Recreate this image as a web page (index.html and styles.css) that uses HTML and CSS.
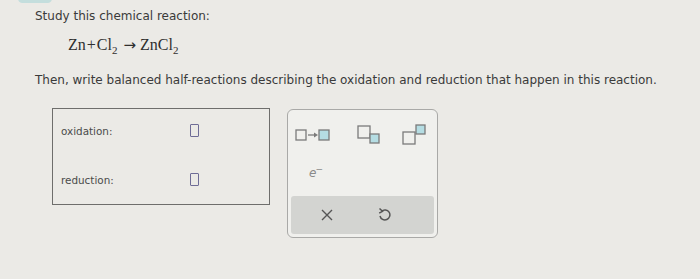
FILE: index.html
```html
<!DOCTYPE html>
<html lang="en">
<head>
    <meta charset="UTF-8">
    <meta name="viewport" content="width=device-width, initial-scale=1.0">
    <title>Half-Reactions</title>
    <link rel="stylesheet" href="styles.css">
</head>
<body>
    <!-- Tab edge peeking in at the top -->
    <div class="tab"></div>

    <div class="page">
        <p class="prompt">Study this chemical reaction:</p>

        <!-- The reaction itself, set in a serif face -->
        <p class="equation">Zn<span class="op">+</span>Cl<sub>2</sub><span class="arrow">&#8594;</span>ZnCl<sub>2</sub></p>

        <p class="prompt instruction">Then, write balanced half-reactions describing the oxidation and reduction that happen in this reaction.</p>

        <div class="workarea">
            <!-- Answer fields -->
            <div class="answer-box">
                <div class="answer-row">
                    <span class="answer-label">oxidation:</span>
                    <span class="slot"></span>
                </div>
                <div class="answer-row">
                    <span class="answer-label">reduction:</span>
                    <span class="slot"></span>
                </div>
            </div>

            <!-- Palette of templates -->
            <div class="palette">
                <div class="palette-row">
                    <button class="tool" type="button" title="Arrow">
                        <svg width="36" height="14" viewBox="0 0 36 14">
                            <rect x="1" y="2" width="10" height="10" fill="none" stroke="#7a7a7a" stroke-width="1.3"/>
                            <line x1="13" y1="7" x2="20" y2="7" stroke="#7a7a7a" stroke-width="1.3"/>
                            <path d="M19 4.5 L23 7 L19 9.5 Z" fill="#7a7a7a"/>
                            <rect x="24" y="2" width="10" height="10" fill="#b5dde3" stroke="#7a7a7a" stroke-width="1.3"/>
                        </svg>
                    </button>
                    <button class="tool" type="button" title="Subscript">
                        <svg width="24" height="20" viewBox="0 0 24 20">
                            <rect x="1" y="1" width="12" height="12" fill="none" stroke="#7a7a7a" stroke-width="1.3"/>
                            <rect x="13" y="9" width="9" height="9" fill="#b5dde3" stroke="#7a7a7a" stroke-width="1.3"/>
                        </svg>
                    </button>
                    <button class="tool" type="button" title="Superscript">
                        <svg width="26" height="22" viewBox="0 0 26 22">
                            <rect x="1" y="8" width="12" height="12" fill="none" stroke="#7a7a7a" stroke-width="1.3"/>
                            <rect x="14" y="1" width="9" height="9" fill="#b5dde3" stroke="#7a7a7a" stroke-width="1.3"/>
                        </svg>
                    </button>
                </div>

                <div class="electron">e<sup>&minus;</sup></div>

                <div class="action-bar">
                    <button class="action clear" type="button" title="Clear">
                        <svg width="14" height="14" viewBox="0 0 14 14">
                            <path d="M2 2 L12 12 M12 2 L2 12" stroke="#555" stroke-width="1.4" fill="none"/>
                        </svg>
                    </button>
                    <button class="action undo" type="button" title="Undo">
                        <svg width="14" height="16" viewBox="0 0 14 16">
                            <path d="M4.5 4.2 A5 5 0 1 1 3 9" stroke="#555" stroke-width="1.5" fill="none"/>
                            <path d="M2.5 1.5 L5.5 4.3 L2.2 6.2" stroke="#555" stroke-width="1.5" fill="none"/>
                        </svg>
                    </button>
                </div>
            </div>
        </div>
    </div>
</body>
</html>
```

FILE: styles.css
```css
body {
    margin: 0;
    background-color: #ebeae6;        /* Paper grey backdrop */
    font-family: "DejaVu Sans", Verdana, sans-serif;
    color: #3a3a3a;
}

.tab {
    position: absolute;
    left: 18px;
    top: -6px;
    width: 34px;
    height: 9px;
    border-radius: 5px;
    background-color: #c4dedd;
}

.page {
    padding: 8px 0 0 35px;
}

.prompt {
    margin: 0;
    font-size: 12px;
    line-height: 16px;
}

.equation {
    margin: 11px 0 0 33px;
    font-family: "Liberation Serif", "Times New Roman", serif;
    font-size: 16px;
    line-height: 20px;
    color: #2f2f2f;
}

.equation sub {
    font-size: 11px;
    line-height: 0;
}

.equation .op {
    padding: 0 1px;
}

.equation .arrow {
    font-family: "DejaVu Sans", sans-serif;
    font-size: 15px;
    line-height: 0;
    padding: 0 4px 0 6px;
}

.instruction {
    margin-top: 17px;
}

.workarea {
    display: flex;
    align-items: flex-start;
    gap: 17px;
    margin: 20px 0 0 17px;
}

.answer-box {
    width: 218px;
    height: 97px;
    border: 1px solid #6e6e6c;
    display: flex;
    flex-direction: column;
    justify-content: space-between;
    padding: 15px 0 18px 8px;
    box-sizing: border-box;
}

.answer-row {
    display: flex;
    align-items: center;
}

.answer-label {
    width: 129px;
    font-size: 10.4px;
    color: #4a4a4a;
}

.slot {
    width: 7px;
    height: 11px;
    border: 1.5px solid #6e6c96;
    border-radius: 1px;
}

.palette {
    width: 151px;
    height: 129px;
    margin-top: 1px;
    border: 1.5px solid #a9a9a7;
    border-radius: 6px;
    background-color: #f0f0ed;
    box-sizing: border-box;
    display: flex;
    flex-direction: column;
    padding: 0 3px 3px 3px;
}

.palette-row {
    display: flex;
    justify-content: space-between;
    align-items: center;
    padding: 10px 6px 0 4px;
    height: 30px;
}

.tool,
.action {
    background: none;
    border: none;
    padding: 0;
    display: flex;
    cursor: pointer;
}

.tool:nth-child(2) {
    margin-left: 4px;
}

.electron {
    margin: 14px 0 0 18px;
    font-style: italic;
    font-size: 12px;
    color: #8a8a8a;
    height: 20px;
}

.electron sup {
    font-style: normal;
    font-size: 9px;
    margin-left: -1px;
}

.action-bar {
    margin-top: auto;
    height: 38px;
    background-color: #d3d4d1;
    border-radius: 3px;
    display: flex;
    align-items: center;
}

.clear {
    margin-left: 29px;
}

.undo {
    margin-left: 43px;
}
```
